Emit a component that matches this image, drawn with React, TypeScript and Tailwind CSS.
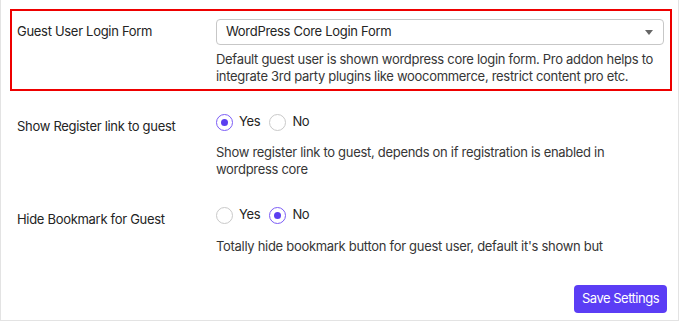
import React from "react";

function Radio({ checked, label }: { checked: boolean; label: string }) {
  return (
    <label className="flex items-center gap-[6px]">
      <span
        className={
          checked
            ? "flex h-[17px] w-[17px] items-center justify-center rounded-full border border-[#7b5cf6] bg-white"
            : "flex h-[17px] w-[17px] items-center justify-center rounded-full border border-[#c9c9c9] bg-white"
        }
      >
        {checked && <span className="h-[7px] w-[7px] rounded-full bg-[#5b3ef0]" />}
      </span>
      <span>{label}</span>
    </label>
  );
}

export default function App() {
  return (
    <div
      className="h-[323px] w-[680px] bg-white text-[13px] tracking-[-0.3px] text-[#242424]"
      style={{ fontFamily: "Inter, 'Liberation Sans', sans-serif" }}
    >
      <div className="h-[321px] w-[679px] border-x border-b border-[#e3e3e3] pt-[9px]">
        <div className="ml-[9px] mr-[6px] flex border-2 border-[#ee0000] pb-[4px] pl-[5px] pr-[6px] pt-[8px]">
          <div className="w-[199px] shrink-0 pt-[4px] leading-[17px]">Guest User Login Form</div>
          <div className="flex-1">
            <div className="flex h-[26px] items-center justify-between rounded-[4px] border border-[#c7c7c7] pl-[9px] pr-[10px]">
              <span>WordPress Core Login Form</span>
              <span className="h-0 w-0 border-x-[4px] border-t-[5px] border-x-transparent border-t-[#666]" />
            </div>
            <p className="mt-[6px] pr-[4px] leading-[17px] text-[#363636]">
              Default guest user is shown wordpress core login form. Pro addon helps to integrate 3rd party plugins like woocommerce, restrict content pro etc.
            </p>
          </div>
        </div>

        <div className="mt-[21px] flex pl-[16px] pr-[20px]">
          <div className="w-[199px] shrink-0 pt-[6px] leading-[17px]">Show Register link to guest</div>
          <div className="flex-1">
            <div className="flex h-[20px] items-center gap-[9px]">
              <Radio checked label="Yes" />
              <Radio checked={false} label="No" />
            </div>
            <p className="mt-[12px] leading-[17px] text-[#363636]">
              Show register link to guest, depends on if registration is enabled in wordpress core
            </p>
          </div>
        </div>

        <div className="mt-[27px] flex pl-[16px] pr-[20px]">
          <div className="w-[199px] shrink-0 pt-[6px] leading-[17px]">Hide Bookmark for Guest</div>
          <div className="flex-1">
            <div className="flex h-[20px] items-center gap-[9px]">
              <Radio checked={false} label="Yes" />
              <Radio checked label="No" />
            </div>
            <p className="mt-[13px] leading-[17px] text-[#363636]">
              Totally hide bookmark button for guest user, default it's shown but
            </p>
          </div>
        </div>

        <div className="mt-[30px] flex justify-end pr-[11px]">
          <button className="h-[28px] rounded-[4px] bg-[#5b3df5] px-[8px] text-[13px] tracking-[-0.5px] text-white">
            Save Settings
          </button>
        </div>
      </div>
    </div>
  );
}
